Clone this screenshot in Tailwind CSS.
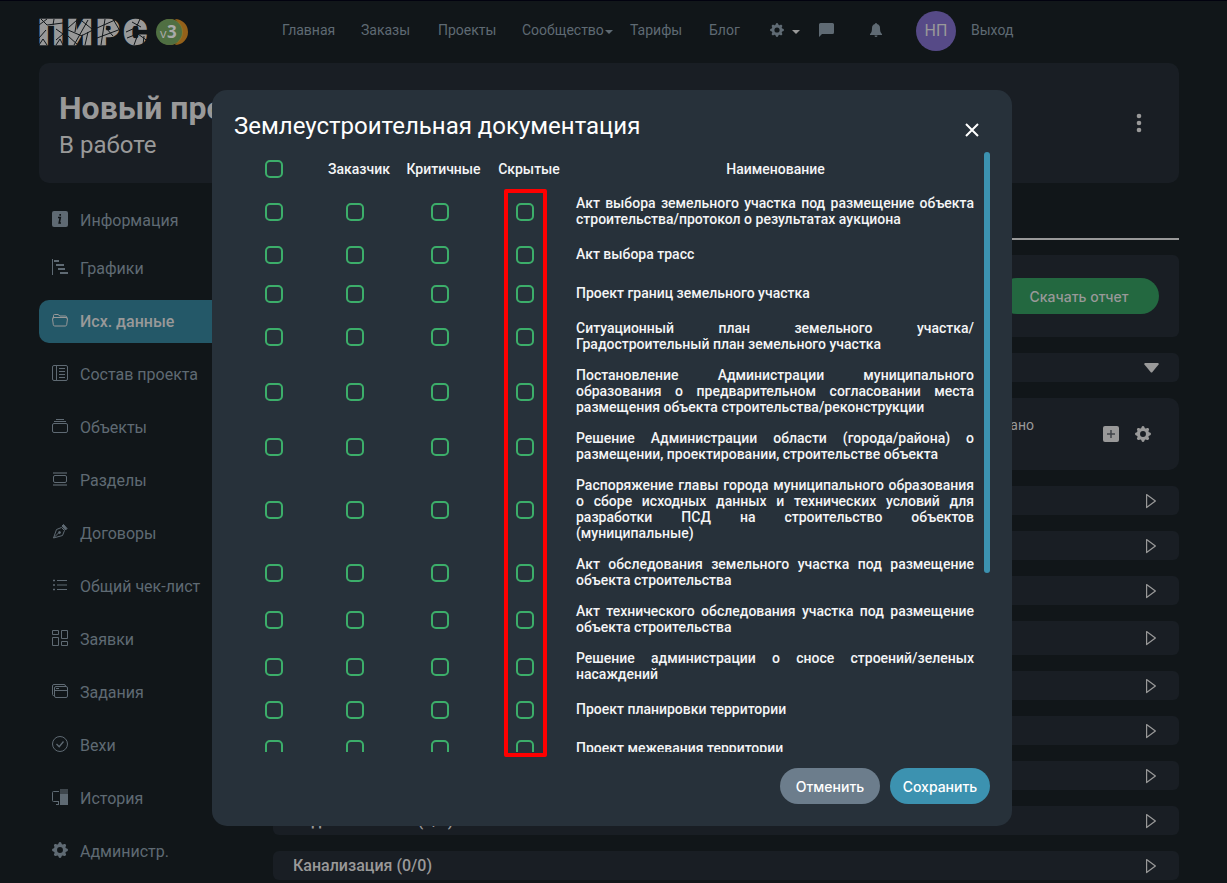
<!DOCTYPE html>
<html lang="ru">
<head>
<meta charset="utf-8">
<meta name="viewport" content="width=device-width, initial-scale=1">
<title>Землеустроительная документация</title>
<script src="https://cdn.jsdelivr.net/npm/@tailwindcss/browser@4"></script>
</head>
<body class="relative h-screen overflow-hidden border-t border-[#02020f] bg-[#111619] font-[Roboto,sans-serif] text-[#999999]">

<svg class="hidden">
  <symbol id="gear" viewBox="0 0 16 16"><path fill="currentColor" fill-rule="evenodd" d="M9.4 1.05c-.41-1.4-2.4-1.4-2.8 0l-.1.34a1.46 1.46 0 0 1-2.1.87l-.31-.17c-1.28-.7-2.69.71-1.99 1.99l.17.31c.45.82.02 1.84-.87 2.1l-.34.1c-1.4.41-1.4 2.4 0 2.8l.34.1a1.46 1.46 0 0 1 .87 2.1l-.17.31c-.7 1.28.71 2.69 1.99 1.99l.31-.17a1.46 1.46 0 0 1 2.1.87l.1.34c.41 1.4 2.4 1.4 2.8 0l.1-.34a1.46 1.46 0 0 1 2.1-.87l.31.17c1.28.7 2.69-.71 1.99-1.99l-.17-.31a1.46 1.46 0 0 1 .87-2.1l.34-.1c1.4-.41 1.4-2.4 0-2.8l-.34-.1a1.46 1.46 0 0 1-.87-2.1l.17-.31c.7-1.28-.71-2.69-1.99-1.99l-.31.17a1.46 1.46 0 0 1-2.1-.87zM8 10.95a2.95 2.95 0 1 1 0-5.9 2.95 2.95 0 0 1 0 5.9z"/></symbol>
  <symbol id="tri" viewBox="0 0 16 16"><path fill="none" stroke="currentColor" stroke-width="1.2" stroke-linejoin="round" d="M3.6 1.6 12.4 8 3.6 14.6z"/></symbol>
</svg>

<div class="pr-12 pl-[39px]">
  <header class="flex h-[62px] items-center text-[14px] text-[#5f6a73]">
    <a href="#" aria-label="ПИРС v3" class="w-[243px]">
      <svg class="block overflow-visible" width="150" height="32" viewBox="0 0 150 32">
        <text x="0 29 58 85" y="28" font-family="Roboto" font-weight="900" font-size="34" fill="#999" stroke="#999" stroke-width="2.500">ПИРС</text>
        <path stroke="#111619" stroke-width="1" fill="none" d="M0 9 8 3M2 3l6 6M8 9l16-2M15 3l-1 6M0 22l7-8M0 29l4-6 4 6M17 13l7 5M17 24l7-6M17 29l4-6 3 6M29 12l9-8M38 3l-2 13M29 20l10 9M29 14l14 6M35 29l14-25M43 5l10 8M42 20l12-6M46 29l3-13M58 12l18-8M66 3l-4 26M58 22l24-9M67 12l7 8M74 3l7 12M87 16l9-4M93 6l9 5M101 3l-4 9M88 22l10-4M95 29l4-11 11 8M104 29l1-9"/>
        <path fill="#94611a" d="M138 3a13 13 0 0 1 0 26 18 18 0 0 0 0-26z" transform="translate(-2 0)"/>
        <circle cx="131" cy="16" r="13" fill="#8b7628"/>
        <circle cx="130" cy="16" r="13" fill="#4f6f42"/>
        <text x="121" y="22" font-family="Open Sans, sans-serif" font-size="13" fill="#aaa">v</text>
        <text x="128" y="22" font-family="Open Sans, sans-serif" font-weight="700" font-size="17" fill="#aaa">3</text>
      </svg>
    </a>
    <nav aria-label="Главное меню" class="flex items-center pb-1">
      <a href="#" class="w-[79px]">Главная</a>
      <a href="#" class="w-[77px]">Заказы</a>
      <a href="#" class="w-[84px]">Проекты</a>
      <a href="#" class="flex w-[108px] items-center gap-px">Сообщество <svg class="mt-1" width="8" height="4"><path fill="currentColor" d="M0 0h8L4 4z"/></svg></a>
      <a href="#" class="w-[79px]">Тарифы</a>
      <a href="#" class="w-[61px]">Блог</a>
      <button type="button" aria-label="Настройки" class="flex w-[49px] items-center gap-2"><svg width="14" height="14"><use href="#gear"/></svg><svg class="mt-1" width="8" height="4"><path fill="#999" d="M0 0h8L4 4z"/></svg></button>
      <button type="button" aria-label="Сообщения" class="w-[51px]"><svg width="15" height="14" viewBox="0 0 15 14"><path fill="currentColor" d="M1.500 0h12a1.500 1.500 0 0 1 1.500 1.500v8a1.500 1.500 0 0 1-1.500 1.500H3l-3 3V1.500A1.500 1.500 0 0 1 1.500 0z"/></svg></button>
      <button type="button" aria-label="Уведомления" class="w-[46px]"><svg width="12" height="14" viewBox="0 0 12 14"><path fill="currentColor" d="M6 0a1 1 0 0 1 1 1c2 .5 3 2 3 4 0 3 .5 5 2 6v1H0v-1c1.500-1 2-3 2-6 0-2 1-3.500 3-4a1 1 0 0 1 1-1zM4.500 12.500h3a1.500 1.500 0 0 1-3 0z"/></svg></button>
    </nav>
    <span class="mr-[15px] mb-0.5 flex size-10 items-center justify-center rounded-full bg-[#564a87] text-[16px] text-[#999999]">НП</span>
    <a href="#" class="pb-1">Выход</a>
  </header>

  <section class="flex h-[120px] items-center justify-between rounded-[10px] bg-[#191e24] pr-8 pl-5">
    <div class="pt-[6px]">
      <h1 class="text-[32px] leading-[38px] font-bold">Новый проект</h1>
      <p class="text-[24px] leading-[36px]">В работе</p>
    </div>
    <button type="button" aria-label="Меню проекта"><svg width="16" height="24" viewBox="0 0 16 24" fill="#999"><circle cx="8" cy="5" r="2.300"/><circle cx="8" cy="12" r="2.300"/><circle cx="8" cy="19" r="2.300"/></svg></button>
  </section>

  <div class="flex gap-[10px] pt-4">
    <nav aria-label="Разделы проекта" class="w-[224px] shrink-0 text-[16px] text-[#5f6a73]">
      <ul class="flex flex-col gap-[10px] [&_a]:flex [&_a]:h-[43px] [&_a]:items-center [&_a]:gap-3 [&_a]:rounded-[10px] [&_a]:pl-[13px] [&_svg]:mb-1 [&_svg]:size-4 [&_svg]:fill-none [&_svg]:stroke-current">
        <li class="-mb-[5px]"><a href="#"><svg viewBox="0 0 16 16"><rect width="16" height="16" rx="2" fill="#5f6a73" stroke="none"/><path stroke="#111619" stroke-width="1.600" d="M6 6.500h2.300L7.200 12h1.800M8.200 3v1.800"/></svg>Информация</a></li>
        <li><a href="#"><svg viewBox="0 0 16 16"><path d="M.5 0v16"/><path stroke-width="1.800" d="M2 2h5M4 6h8M6 10h7M8 14h8"/></svg>Графики</a></li>
        <li><a href="#" aria-current="page" class="bg-[#245868] font-medium text-[#999999]"><svg viewBox="0 0 16 16"><path d="M1.500 6.500V3.500a1 1 0 0 1 1-1h3.500l2 1.500h5.500a1 1 0 0 1 1 1v1.500M1.500 5.500h13a1 1 0 0 1 1 1.200l-.8 6a1.500 1.500 0 0 1-1.400 1.300H2.700a1.500 1.500 0 0 1-1.400-1.300l-.8-6a1 1 0 0 1 1-1.200z"/></svg>Исх. данные</a></li>
        <li><a href="#"><svg viewBox="0 0 16 16"><rect x=".5" y=".5" width="15" height="15" rx="1.500"/><path d="M4.500.5v15M7 3.500h6M7 6.500h6M7 9.500h6M7 12.500h6"/></svg>Состав проекта</a></li>
        <li><a href="#"><svg viewBox="0 0 16 16"><rect x=".5" y="5.500" width="15" height="9" rx="1.500"/><path d="M4 1.500h8M2 3.500h12"/></svg>Объекты</a></li>
        <li><a href="#"><svg viewBox="0 0 16 16"><path stroke="#3e464c" stroke-width="2" d="M1 2h14M1 14h14"/><rect x="1.500" y="4.500" width="13" height="7" rx="1.500"/></svg>Разделы</a></li>
        <li><a href="#"><svg viewBox="0 0 16 16"><path d="m9.500 3.500-5 2L1.500 14l9-2.500 2-5zM1.500 14l5-5"/><circle cx="7.500" cy="8.500" r="1" fill="currentColor"/><path fill="currentColor" d="m10 2 1.500-1.500 3.500 4L13.500 6z"/></svg>Договоры</a></li>
        <li><a href="#"><svg viewBox="0 0 16 16"><path d="M5 3.500h10M5 8h10M5 12.500h10"/><path stroke-width="1.500" d="M1 3.500h2M1 8h2M1 12.500h2"/></svg>Общий чек-лист</a></li>
        <li><a href="#"><svg viewBox="0 0 16 16"><path d="M.5.500h6v4h-6zM9.500.500h6v8h-6zM.5 7.500h6v8h-6zM9.500 11.500h6v4h-6z"/></svg>Заявки</a></li>
        <li><a href="#"><svg viewBox="0 0 16 16"><rect x="2.500" y="3.500" width="13" height="11" rx="1.500"/><path d="M2.500 7.500h13M4 5.500h3M2 12.500H1.500a1 1 0 0 1-1-1V3a1.500 1.500 0 0 1 1.500-1.500h10a1.500 1.500 0 0 1 1.500 1.500"/></svg>Задания</a></li>
        <li><a href="#"><svg viewBox="0 0 16 16"><circle cx="8" cy="8" r="7.500"/><path stroke-width="1.300" d="m4.500 8 2.700 2.700L11.500 5.500"/></svg>Вехи</a></li>
        <li><a href="#"><svg viewBox="0 0 16 16"><path d="M7 2.500H1.500a1 1 0 0 0-1 1v8a1 1 0 0 0 1 1H7M4 15.500h3M6.500 12.500v3"/><path fill="#3e464c" stroke="none" d="M8 0h8v5H8z"/><path fill="currentColor" stroke="none" d="M8 5h8v11H8z"/></svg>История</a></li>
        <li><a href="#"><svg viewBox="0 0 16 16"><use href="#gear" stroke="none"/></svg>Администр.</a></li>
      </ul>
    </nav>

    <main class="flex grow flex-col gap-4 [&_button]:text-[#999999]">
      <div class="-mb-px h-[41px] border-b-2 border-[#999999]"></div>
      <div class="flex h-[82px] items-center justify-end rounded-md bg-[#191e24] pr-5">
        <button type="button" class="h-9 w-40 rounded-full bg-[#236840] font-[Inter,sans-serif] text-[14px] font-medium">Скачать отчет</button>
      </div>
      <div class="flex h-[29px] items-center justify-end rounded-md bg-[#191e24] pr-5">
        <button type="button" aria-label="Свернуть"><svg width="15" height="10"><path fill="currentColor" d="M1 0h13l1 1-7 8.500h-1L0 1z"/></svg></button>
      </div>
      <div class="flex h-[72px] items-center rounded-[10px] bg-[#191e24] pr-7">
        <p class="mb-[18px] w-[761px] text-right text-[14px]">Задано</p>
        <div class="ml-auto flex gap-4">
          <button type="button" aria-label="Добавить"><svg width="16" height="16"><rect width="16" height="16" rx="2" fill="currentColor"/><path stroke="#40444a" stroke-width="1.500" d="M4 8h8M8 4v8"/></svg></button>
          <button type="button" aria-label="Настройки раздела"><svg width="16" height="16"><use href="#gear"/></svg></button>
        </div>
      </div>
      <ul class="flex flex-col gap-4 text-[16px] font-medium [&_button]:flex [&_button]:min-h-[29px] [&_button]:w-full [&_button]:items-center [&_button]:justify-end [&_button]:rounded-md [&_button]:bg-[#191e24] [&_button]:pr-5 [&_button]:pl-5 [&_svg]:size-4">
        <li><button type="button" aria-label="Раздел 1"><svg><use href="#tri"/></svg></button></li>
        <li><button type="button" aria-label="Раздел 2"><svg><use href="#tri"/></svg></button></li>
        <li><button type="button" aria-label="Раздел 3"><svg><use href="#tri"/></svg></button></li>
        <li><button type="button" aria-label="Раздел 4" class="h-[34px]"><svg><use href="#tri"/></svg></button></li>
        <li><button type="button" aria-label="Раздел 5"><svg><use href="#tri"/></svg></button></li>
        <li><button type="button" aria-label="Раздел 6"><svg><use href="#tri"/></svg></button></li>
        <li><button type="button" aria-label="Раздел 7"><svg><use href="#tri"/></svg></button></li>
        <li><button type="button"><span class="mr-auto">Водоснабжение (0/0)</span><svg><use href="#tri"/></svg></button></li>
        <li><button type="button"><span class="mr-auto">Канализация (0/0)</span><svg><use href="#tri"/></svg></button></li>
      </ul>
    </main>
  </div>
</div>

<div class="absolute inset-0 flex items-start justify-center pt-[89px] pr-[3px]">
  <div role="dialog" aria-modal="true" aria-labelledby="dlg-title" class="relative w-[800px] rounded-[15px] bg-[#27313a] pr-[22px] pb-[22px] pl-[22px] text-[#f4f5f6]">
    <div class="flex h-[62px] items-center justify-between pt-3 pr-[11px]">
      <h2 id="dlg-title" class="pb-[3px] text-[24px] leading-[30px] text-white">Землеустроительная документация</h2>
      <button type="button" aria-label="Закрыть" class="mt-[5px]"><svg width="14" height="14"><path stroke="#fff" stroke-width="2" d="m1 1 12 12M13 1 1 13"/></svg></button>
    </div>
    <div class="flex h-[600px]">
      <div class="h-full min-w-0 flex-1 overflow-y-auto [scrollbar-width:none]">
        <table class="w-full table-fixed text-[14px] leading-4 font-medium [&_input]:mx-auto [&_input]:block [&_input]:size-[18px] [&_input]:appearance-none [&_input]:rounded-[5px] [&_input]:border-2 [&_input]:border-[#3cae6a] [&_input:checked]:bg-[#3cae6a] [&_td]:px-0 [&_td]:pt-0 [&_td]:pb-[2px] [&_td:last-child]:pr-[10px] [&_td:last-child]:pl-[9px] [&_td:last-child]:pt-[6px] [&_td:last-child]:pb-[9px] [&_td:last-child]:text-justify [&_th]:pt-0 [&_th]:pb-1 [&_th]:font-medium">
          <colgroup><col class="w-20"><col class="w-[82px]"><col class="w-[87px]"><col class="w-[84px]"><col></colgroup>
          <thead><tr class="h-[37px]"><th class="px-0"><input type="checkbox" aria-label="Выбрать все"></th><th scope="col" class="pr-0 pl-2">Заказчик</th><th scope="col" class="pr-0 pl-2">Критичные</th><th scope="col" class="pr-0 pl-2">Скрытые</th><th scope="col" class="px-0">Наименование</th></tr></thead>
          <tbody id="rows"></tbody>
        </table>
      </div>
      <div class="h-[421px] w-[6px] shrink-0 rounded-full bg-[#3c92b0]"></div>
    </div>
    <div class="flex justify-end gap-[10px] pt-4 font-[Inter,sans-serif] text-[14px] font-medium text-white">
      <button type="button" class="h-9 w-[100px] rounded-full bg-[#6c7d8c]">Отменить</button>
      <button type="button" class="h-9 w-[100px] rounded-full bg-[#3c92b0]">Сохранить</button>
    </div>
    <div class="pointer-events-none absolute top-[99px] left-[292px] h-[568px] w-[43px] rounded-xs border-4 border-[#ff0000]"></div>
  </div>
</div>

<script>
const names = [
  'Акт выбора земельного участка под размещение объекта строительства/протокол о результатах аукциона',
  'Акт выбора трасс',
  'Проект границ земельного участка',
  'Ситуационный план земельного участка/ Градостроительный план земельного участка',
  'Постановление Администрации муниципального образования о предварительном согласовании места размещения объекта строительства/реконструкции',
  'Решение Администрации области (города/района) о размещении, проектировании, строительстве объекта',
  'Распоряжение главы города муниципального образования о сборе исходных данных и технических условий для разработки ПСД на строительство объектов (муниципальные)',
  'Акт обследования земельного участка под размещение объекта строительства',
  'Акт технического обследования участка под размещение объекта строительства',
  'Решение администрации о сносе строений/зеленых насаждений',
  'Проект планировки территории',
  'Проект межевания территории'
];
const columns = ['Выбрать', 'Заказчик', 'Критичные', 'Скрытые'];
document.getElementById('rows').innerHTML = names.map(n =>
  `<tr class="h-[39px]">${columns.map(c => `<td><input type="checkbox" aria-label="${c}: ${n}"></td>`).join('')}<td>${n}</td></tr>`
).join('');
</script>
</body>
</html>
